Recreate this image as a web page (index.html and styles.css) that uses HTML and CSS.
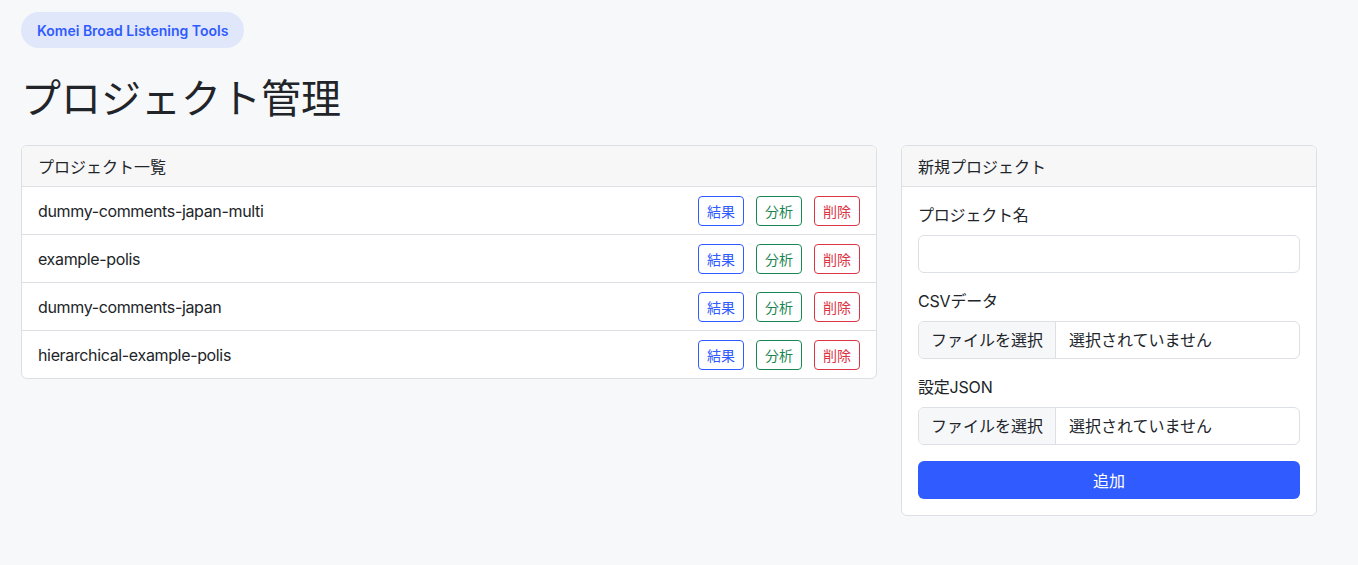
FILE: index.html
```html
<!DOCTYPE html>
<html lang="ja">
<head>
<meta charset="utf-8">
<title>プロジェクト管理</title>
<link rel="stylesheet" href="styles.css">
</head>
<body>
<div class="page">
  <div class="badge">Komei Broad Listening Tools</div>
  <h1 class="title">プロジェクト管理</h1>
  <div class="cols">
    <div class="card list-card">
      <div class="card-header">プロジェクト一覧</div>
      <ul class="list">
        <li class="row"><span class="name">dummy-comments-japan-multi</span><span class="actions"><button class="btn btn-blue">結果</button><button class="btn btn-green">分析</button><button class="btn btn-red">削除</button></span></li>
        <li class="row"><span class="name">example-polis</span><span class="actions"><button class="btn btn-blue">結果</button><button class="btn btn-green">分析</button><button class="btn btn-red">削除</button></span></li>
        <li class="row"><span class="name">dummy-comments-japan</span><span class="actions"><button class="btn btn-blue">結果</button><button class="btn btn-green">分析</button><button class="btn btn-red">削除</button></span></li>
        <li class="row"><span class="name">hierarchical-example-polis</span><span class="actions"><button class="btn btn-blue">結果</button><button class="btn btn-green">分析</button><button class="btn btn-red">削除</button></span></li>
      </ul>
    </div>
    <div class="card form-card">
      <div class="card-header">新規プロジェクト</div>
      <div class="card-body">
        <div class="field">
          <label class="label">プロジェクト名</label>
          <div class="input"></div>
        </div>
        <div class="field">
          <label class="label">CSVデータ</label>
          <div class="input file"><span class="file-btn">ファイルを選択</span><span class="file-text">選択されていません</span></div>
        </div>
        <div class="field">
          <label class="label">設定JSON</label>
          <div class="input file"><span class="file-btn">ファイルを選択</span><span class="file-text">選択されていません</span></div>
        </div>
        <button class="submit">追加</button>
      </div>
    </div>
  </div>
</div>
</body>
</html>
```

FILE: styles.css
```css
* { box-sizing: border-box; }
html, body { margin: 0; padding: 0; }
body {
  background: #f7f8fa;
  color: #212529;
  font-family: Inter, "Noto Sans CJK JP", sans-serif;
  font-size: 16px;
  line-height: 1.5;
}
.page {
  padding: 12px 0 0 21px;
}
.badge {
  display: inline-flex;
  align-items: center;
  height: 36px;
  padding: 0 16px;
  border-radius: 18px;
  background: #e1e7fb;
  color: #2f5bff;
  font-family: Inter, "Noto Sans CJK JP", sans-serif;
  font-weight: 600;
  font-size: 14px;
}
.title {
  margin: 18px 0 0 0;
  font-size: 40px;
  font-weight: 400;
  line-height: 60px;
  height: 60px;
  font-family: "Noto Sans CJK JP", sans-serif;
}
.cols {
  display: flex;
  align-items: flex-start;
  gap: 24px;
  margin-top: 19px;
}
.card {
  background: #fff;
  border: 1px solid #dcdfe3;
  border-radius: 6px;
  overflow: hidden;
}
.list-card { width: 856px; }
.form-card { width: 416px; }
.card-header {
  height: 41px;
  padding: 0 16px;
  display: flex;
  align-items: center;
  background: #f7f7f8;
  border-bottom: 1px solid #dcdfe3;
  font-size: 16px;
  font-family: "Noto Sans CJK JP", sans-serif;
}
.list { list-style: none; margin: 0; padding: 0; }
.row {
  height: 48px;
  display: flex;
  align-items: center;
  justify-content: space-between;
  padding: 0 16px;
  border-bottom: 1px solid #dcdfe3;
}
.row:last-child { border-bottom: 0; height: 47px; }
.name { letter-spacing: -0.35px; }
.actions { display: flex; gap: 12px; }
.btn {
  font-family: "Noto Sans CJK JP", sans-serif;
  font-size: 14px;
  line-height: 20px;
  height: 30px;
  padding: 4px 8px;
  background: #fff;
  border: 1px solid;
  border-radius: 4px;
}
.btn-blue { color: #2f5bff; border-color: #2f5bff; }
.btn-green { color: #198754; border-color: #198754; }
.btn-red { color: #dc3545; border-color: #dc3545; }
.card-body { padding: 16px; }
.field { margin-bottom: 16px; }
.label { display: block; margin-bottom: 8px; height: 24px; font-size: 16px; letter-spacing: -0.2px; }
.input {
  height: 38px;
  border: 1px solid #dcdfe3;
  border-radius: 6px;
  background: #fff;
}
.file { display: flex; align-items: stretch; overflow: hidden; }
.file-btn {
  display: flex;
  align-items: center;
  padding: 0 12px;
  background: #f6f7f9;
  border-right: 1px solid #dcdfe3;
}
.file-text {
  display: flex;
  align-items: center;
  padding: 0 13px;
}
.submit {
  display: block;
  width: 100%;
  height: 38px;
  border: 0;
  border-radius: 6px;
  background: #2f5bff;
  color: #fff;
  font-family: "Noto Sans CJK JP", sans-serif;
  font-size: 16px;
}
```
